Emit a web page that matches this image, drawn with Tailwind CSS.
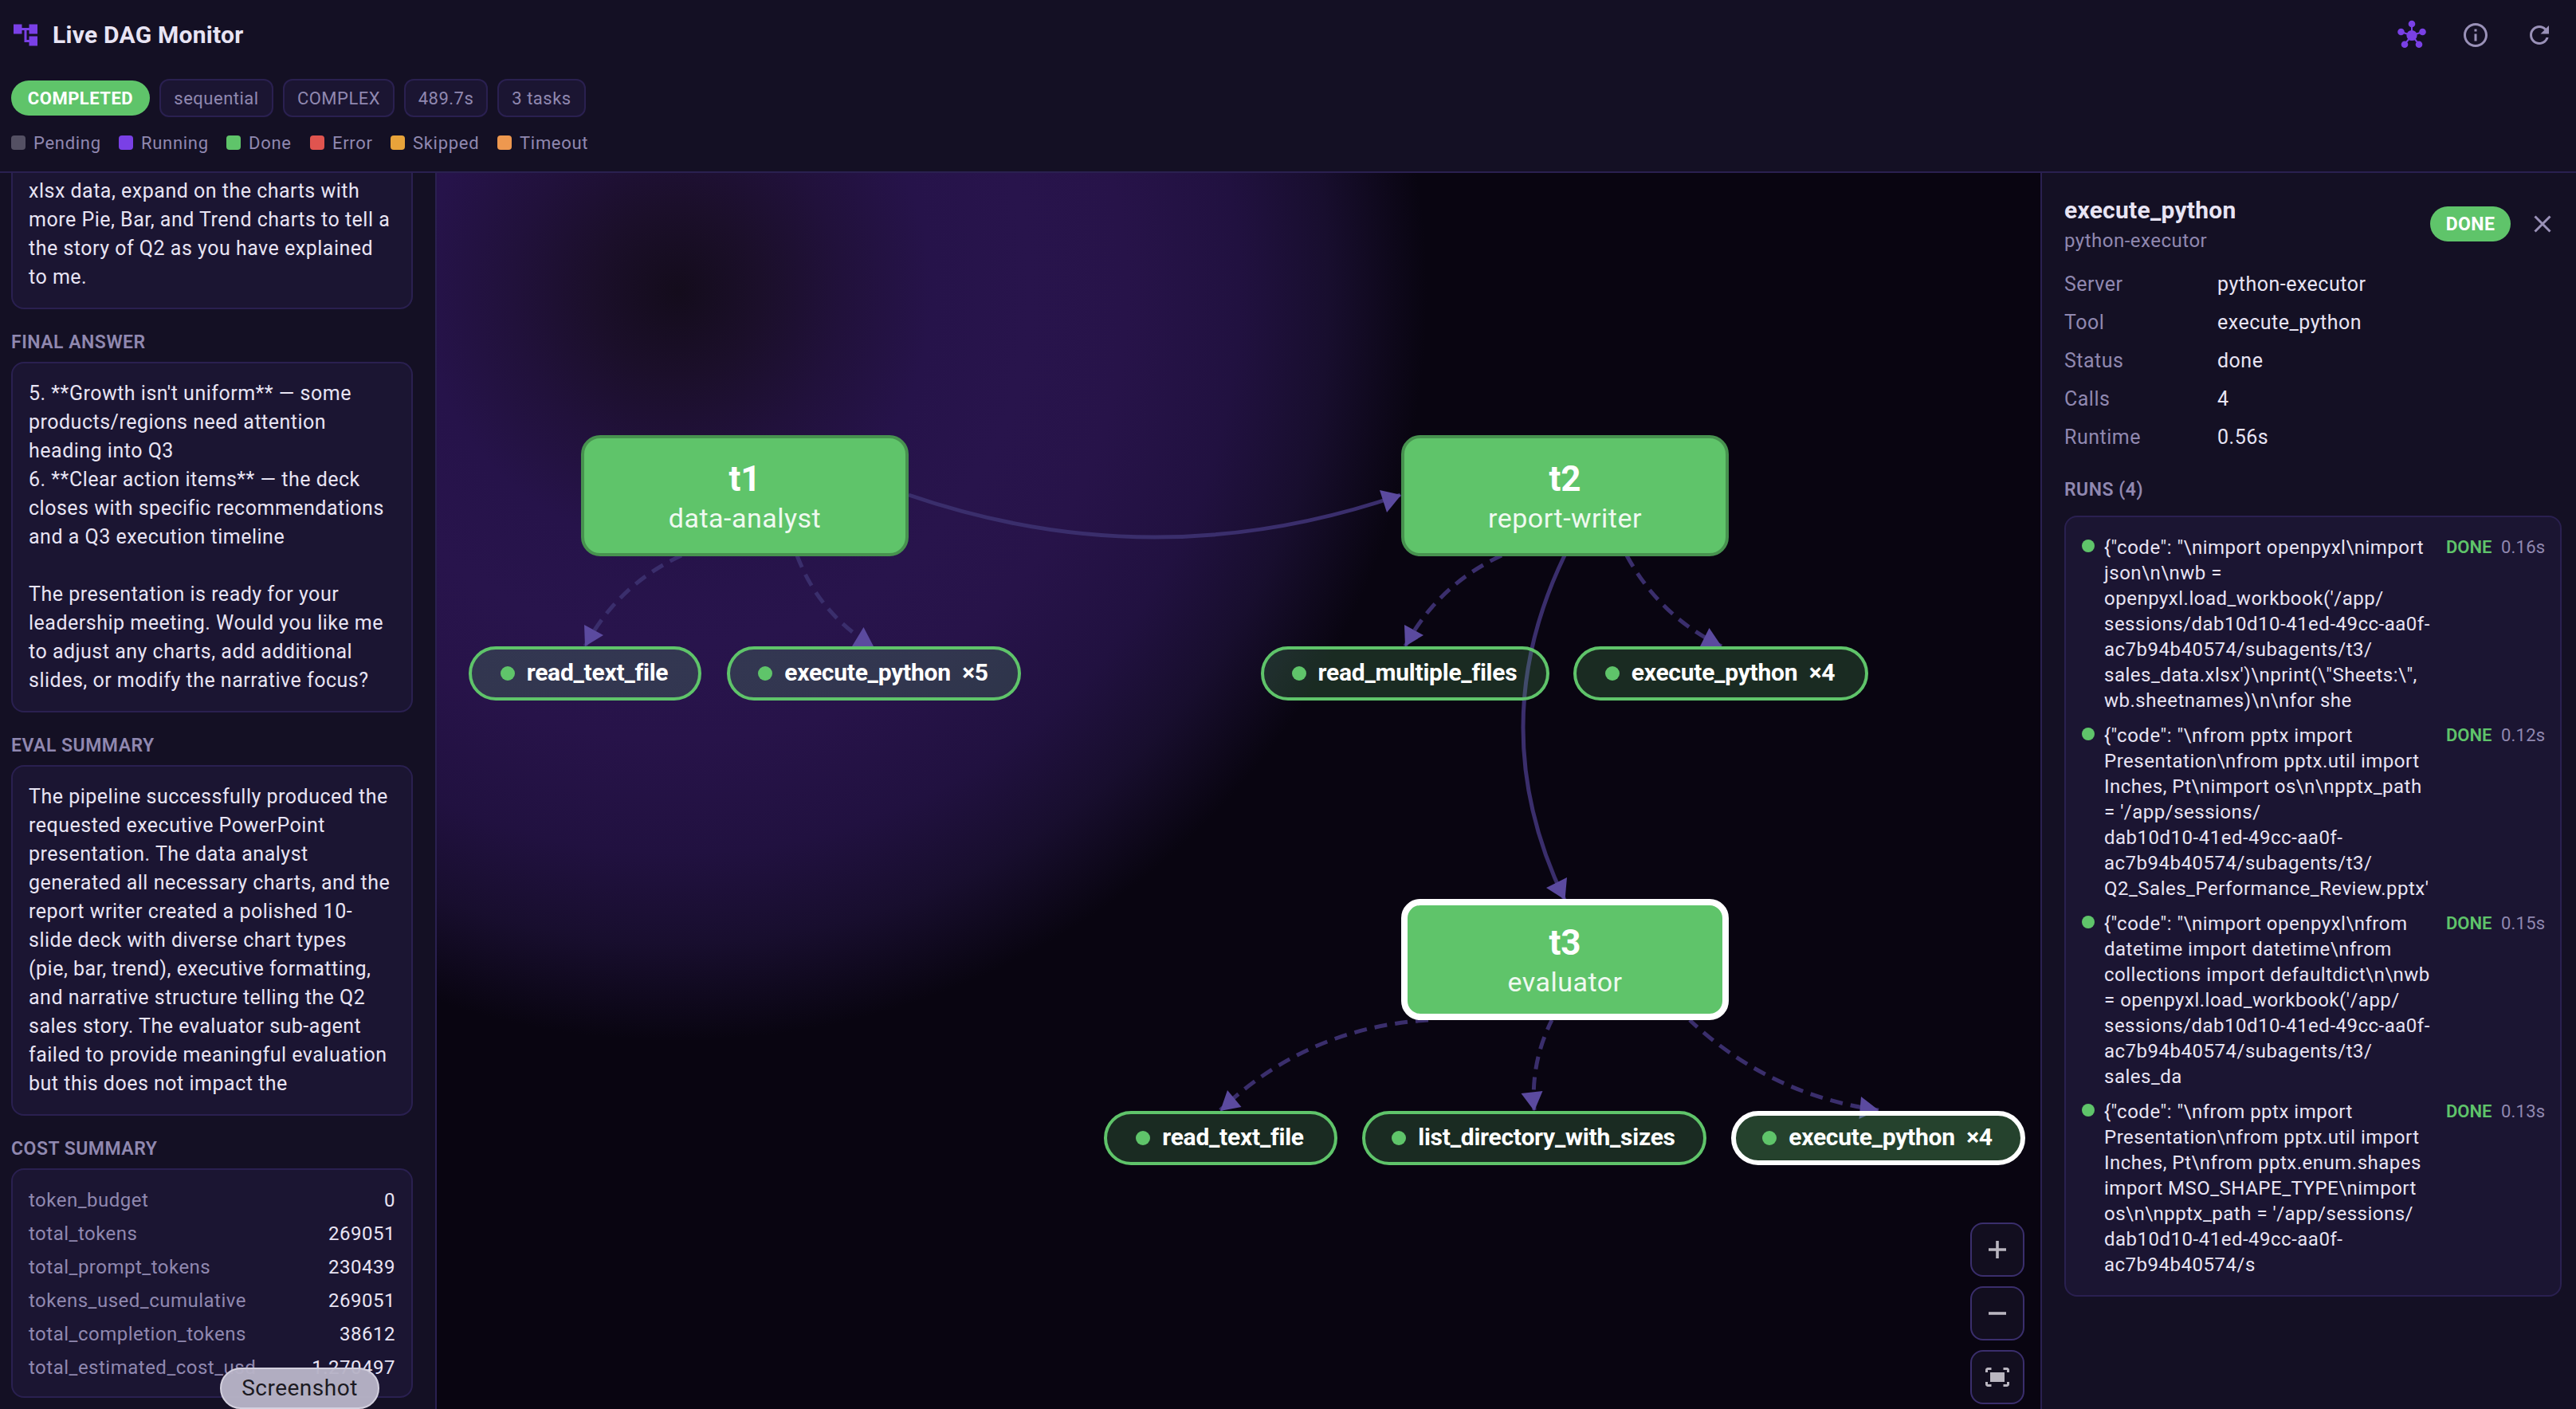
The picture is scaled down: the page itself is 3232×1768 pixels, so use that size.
<!DOCTYPE html>
<html lang="en">
<head>
  <meta charset="UTF-8" />
  <meta name="viewport" content="width=device-width, initial-scale=1" />
  <title>Live DAG Monitor</title>
  <script src="https://cdn.jsdelivr.net/npm/@tailwindcss/browser@4"></script>
</head>
<body class="h-screen overflow-hidden bg-[#141024] font-[Roboto,'Liberation_Sans',sans-serif] tracking-[0.5px] text-[#e8e4f4]">
<div class="relative flex h-full flex-col">

  <!-- Header -->
  <header class="flex h-[217px] shrink-0 flex-col border-b-2 border-[#2a2050] pl-3.5">
    <div class="flex h-[87px] items-center justify-between pr-1.5">
      <div class="flex items-center">
        <svg class="size-9" viewBox="0 0 24 24" fill="#7a40e6"><path d="M22 11V3h-7v3H9V3H2v8h7V8h2v10h4v3h7v-8h-7v3h-2V8h2v3z"/></svg>
        <h1 class="ml-4 text-[30px] leading-none font-bold tracking-[0.25px]">Live DAG Monitor</h1>
      </div>
      <div class="flex">
        <button class="grid size-20 place-items-center">
          <svg class="size-10" viewBox="0 0 40 40" fill="#7a40e6" stroke="#7a40e6" stroke-width="2">
            <path d="M20 20.5V6M20 20.5L6.5 16M20 20.5L33.5 16M20 20.5L11 31.5M20 20.5L29 31.5"/>
            <g stroke="none"><circle cx="20" cy="20.5" r="6.6"/><circle cx="20" cy="6" r="4.3"/><circle cx="6.5" cy="16" r="4.3"/><circle cx="33.5" cy="16" r="4.3"/><circle cx="11" cy="31.7" r="4.3"/><circle cx="29" cy="31.7" r="4.3"/></g>
          </svg>
        </button>
        <button class="grid size-20 place-items-center">
          <svg class="size-9" viewBox="0 0 24 24" fill="#9a91b8"><path d="M11 7h2v2h-2zm0 4h2v6h-2zm1-9C6.48 2 2 6.48 2 12s4.48 10 10 10 10-4.48 10-10S17.52 2 12 2zm0 18c-4.41 0-8-3.59-8-8s3.59-8 8-8 8 3.59 8 8-3.59 8-8 8z"/></svg>
        </button>
        <button class="grid size-20 place-items-center">
          <svg class="size-9" viewBox="0 0 24 24" fill="#9a91b8"><path d="M17.65 6.35C16.2 4.9 14.21 4 12 4c-4.42 0-7.99 3.58-7.99 8s3.57 8 7.99 8c3.73 0 6.84-2.55 7.73-6h-2.08c-.82 2.33-3.04 4-5.65 4-3.31 0-6-2.69-6-6s2.69-6 6-6c1.66 0 3.14.69 4.22 1.78L13 11h7V4l-2.35 2.35z"/></svg>
        </button>
      </div>
    </div>
    <div class="mt-3 flex h-12 items-center gap-3 text-[22px] leading-none text-[#9088b0]">
      <span class="grid h-11 w-[174px] place-items-center rounded-full bg-[#5fc46a] pt-0.5 font-bold text-white">COMPLETED</span>
      <span class="grid h-12 w-[143px] place-items-center rounded-xl border-2 border-[#2a2050] bg-[#1b1532] pt-0.5">sequential</span>
      <span class="grid h-12 w-[140px] place-items-center rounded-xl border-2 border-[#2a2050] bg-[#1b1532] pt-0.5">COMPLEX</span>
      <span class="grid h-12 w-[105px] place-items-center rounded-xl border-2 border-[#2a2050] bg-[#1b1532] pt-0.5">489.7s</span>
      <span class="grid h-12 w-[111px] place-items-center rounded-xl border-2 border-[#2a2050] bg-[#1b1532] pt-0.5">3 tasks</span>
    </div>
    <div class="mt-4 flex h-8 items-center text-[22px] leading-none tracking-[0.7px] text-[#9088b0]">
      <span class="flex w-[135px] items-center gap-2.5"><i class="size-[18px] rounded bg-[#545063]"></i><b class="pt-0.5 font-normal">Pending</b></span>
      <span class="flex w-[135px] items-center gap-2.5"><i class="size-[18px] rounded bg-[#7a40e6]"></i><b class="pt-0.5 font-normal">Running</b></span>
      <span class="flex w-[105px] items-center gap-2.5"><i class="size-[18px] rounded bg-[#5fc46a]"></i><b class="pt-0.5 font-normal">Done</b></span>
      <span class="flex w-[101px] items-center gap-2.5"><i class="size-[18px] rounded bg-[#e0544f]"></i><b class="pt-0.5 font-normal">Error</b></span>
      <span class="flex w-[134px] items-center gap-2.5"><i class="size-[18px] rounded bg-[#e8a33a]"></i><b class="pt-0.5 font-normal">Skipped</b></span>
      <span class="flex items-center gap-2.5"><i class="size-[18px] rounded bg-[#ee984f]"></i><b class="pt-0.5 font-normal">Timeout</b></span>
    </div>
  </header>

  <div class="flex min-h-0 flex-1">
    <!-- Session summary -->
    <aside class="flex w-[548px] shrink-0 flex-col overflow-hidden border-r-2 border-[#2a2050] pr-7 pl-3.5">
      <div class="h-[171px] shrink-0 rounded-b-2xl border-2 border-t-0 border-[#2a2050] bg-[#1b1532] px-5 pt-[5px] text-[25px] leading-9 whitespace-pre">xlsx data, expand on the charts with
more Pie, Bar, and Trend charts to tell a
the story of Q2 as you have explained
to me.</div>
      <h2 class="flex h-[66px] shrink-0 items-center pt-4 text-[23px] leading-none font-semibold tracking-[0.5px] text-[#9088b0]">FINAL ANSWER</h2>
      <div class="h-[440px] shrink-0 rounded-2xl border-2 border-[#2a2050] bg-[#1b1532] p-5 text-[25px] leading-9 whitespace-pre">5. **Growth isn't uniform** — some
products/regions need attention
heading into Q3
6. **Clear action items** — the deck
closes with specific recommendations
and a Q3 execution timeline

The presentation is ready for your
leadership meeting. Would you like me
to adjust any charts, add additional
slides, or modify the narrative focus?</div>
      <h2 class="flex h-[66px] shrink-0 items-center pt-4 text-[23px] leading-none font-semibold tracking-[0.5px] text-[#9088b0]">EVAL SUMMARY</h2>
      <div class="h-[440px] shrink-0 rounded-2xl border-2 border-[#2a2050] bg-[#1b1532] p-5 text-[25px] leading-9 whitespace-pre">The pipeline successfully produced the
requested executive PowerPoint
presentation. The data analyst
generated all necessary charts, and the
report writer created a polished 10-
slide deck with diverse chart types
(pie, bar, trend), executive formatting,
and narrative structure telling the Q2
sales story. The evaluator sub-agent
failed to provide meaningful evaluation
but this does not impact the</div>
      <h2 class="flex h-[66px] shrink-0 items-center pt-4 text-[23px] leading-none font-semibold tracking-[0.5px] text-[#9088b0]">COST SUMMARY</h2>
      <div id="costs" class="h-[288px] shrink-0 rounded-2xl border-2 border-[#2a2050] bg-[#1b1532] px-5 py-4 text-2xl tracking-[0.5px]"></div>
    </aside>

    <!-- DAG canvas -->
    <main id="canvas" class="relative min-w-0 flex-1 overflow-hidden bg-[radial-gradient(circle_940px_at_302px_149px,#140c1c_0%,#1b0f2a_11%,#21113b_22%,#26134a_34%,#28144c_47%,#271349_60%,#211140_75%,#180e2e_87%,#090511_100%)]">
      <svg class="absolute inset-0 size-full" viewBox="548 217 2012 1551" fill="none">
        <g stroke="#3a2e6c" stroke-width="5">
          <path d="M1140 621Q1449 727 1757 621"/>
          <path d="M1963 697Q1859 913 1963 1129"/>
          <g stroke-dasharray="16 10">
            <path d="M855 697Q775 734 734 811"/>
            <path d="M1000 697Q1028 771 1096 811"/>
            <path d="M1884 697Q1804 734 1763 811"/>
            <path d="M2041 697Q2082 773 2160 811"/>
            <path d="M1792 1280Q1641 1289 1531 1393"/>
            <path d="M1947 1280Q1920 1334 1925 1393" stroke-dashoffset="3"/>
            <path d="M2120 1280Q2220 1374 2357 1393" stroke-dashoffset="3"/>
          </g>
        </g>
        <g fill="#5b4a9f">
          <path d="M1731 615L1740 643L1758 621Z"/>
          <path d="M1966 1101L1940 1114L1963.5 1129Z"/>
          <path d="M733 784L757 797L734 811Z"/>
          <path d="M1083.5 787L1069 811H1096Z"/>
          <path d="M1762 784L1786 797L1763 811Z"/>
          <path d="M2144.5 788L2133 811H2160Z"/>
          <path d="M1540 1368L1557.5 1389L1531 1394Z"/>
          <path d="M1908.5 1372L1935.5 1369L1925 1394Z"/>
          <path d="M2335 1376L2332.5 1404L2357 1393Z"/>
        </g>
      </svg>

      <div class="absolute right-5 bottom-1.5 flex flex-col gap-3">
        <button class="grid size-[68px] place-items-center rounded-2xl border-2 border-[#3a2e6c] bg-[#120e1f]">
          <svg class="size-9" viewBox="0 0 36 36" stroke="#bab6c0" stroke-width="3.6"><path d="M7 18H29M18 7V29"/></svg>
        </button>
        <button class="grid size-[68px] place-items-center rounded-2xl border-2 border-[#3a2e6c] bg-[#120e1f]">
          <svg class="size-9" viewBox="0 0 36 36" stroke="#bab6c0" stroke-width="3.6"><path d="M7 18H29"/></svg>
        </button>
        <button class="grid size-[68px] place-items-center rounded-2xl border-2 border-[#3a2e6c] bg-[#120e1f]">
          <svg class="size-9" viewBox="0 0 24 24" fill="#bab6c0"><path d="M17 4h3c1.1 0 2 .9 2 2v2h-2V6h-3V4zM4 8V6h3V4H4c-1.1 0-2 .9-2 2v2h2zm16 8v2h-3v2h3c1.1 0 2-.9 2-2v-2h-2zM7 18H4v-2H2v2c0 1.1.9 2 2 2h3v-2zM18 8H6v8h12V8z"/></svg>
        </button>
      </div>
    </main>

    <!-- Node details -->
    <aside class="flex w-[672px] shrink-0 flex-col border-l-2 border-[#2a2050] pr-[18px] pl-7">
      <div class="mt-7 flex h-[72px] items-center">
        <div class="flex-1">
          <div class="text-[30px] leading-10 font-bold tracking-[0.25px]">execute_python</div>
          <div class="pt-0.5 text-2xl leading-8 text-[#9088b0]">python-executor</div>
        </div>
        <span class="grid h-11 w-[101px] place-items-center rounded-full bg-[#5fc46a] text-[23px] leading-none font-bold tracking-[0.4px] text-white">DONE</span>
        <svg class="mr-1.5 ml-[22px] size-9" viewBox="0 0 36 36" stroke="#9a91b8" stroke-width="3"><path d="M8.5 8.5L27.5 27.5M27.5 8.5L8.5 27.5"/></svg>
      </div>
      <dl id="details" class="mt-4 grid grid-cols-[192px_1fr] text-[25px] leading-[48px]"></dl>
      <h2 class="mt-6 flex h-[50px] items-start pt-1.5 text-[23px] leading-none font-semibold tracking-[0.5px] text-[#9088b0]">RUNS (4)</h2>
      <div id="runs" class="h-[980px] rounded-2xl border-2 border-[#2a2050] bg-[#1b1532] px-5 py-4"></div>
    </aside>
  </div>

  <div class="absolute bottom-0 left-[276px] grid h-[52px] w-[200px] place-items-center rounded-full border-2 border-[#d3d0de] bg-[#b7b3c6]/97 text-[28px] leading-none text-[#1c1a22]">Screenshot</div>
</div>

<script>
  const costs = [
    ["token_budget", "0"],
    ["total_tokens", "269051"],
    ["total_prompt_tokens", "230439"],
    ["tokens_used_cumulative", "269051"],
    ["total_completion_tokens", "38612"],
    ["total_estimated_cost_usd", "1.270497"],
  ];

  const details = [
    ["Server", "python-executor"],
    ["Tool", "execute_python"],
    ["Status", "done"],
    ["Calls", "4"],
    ["Runtime", "0.56s"],
  ];

  const runs = [
    { time: "0.16s", lines: [
      String.raw`{"code": "\nimport openpyxl\nimport`,
      String.raw`json\n\nwb =`,
      "openpyxl.load_workbook('/app/",
      "sessions/dab10d10-41ed-49cc-aa0f-",
      "ac7b94b40574/subagents/t3/",
      String.raw`sales_data.xlsx')\nprint(\"Sheets:\",`,
      String.raw`wb.sheetnames)\n\nfor she`,
    ]},
    { time: "0.12s", lines: [
      String.raw`{"code": "\nfrom pptx import`,
      String.raw`Presentation\nfrom pptx.util import`,
      String.raw`Inches, Pt\nimport os\n\npptx_path`,
      "= '/app/sessions/",
      "dab10d10-41ed-49cc-aa0f-",
      "ac7b94b40574/subagents/t3/",
      "Q2_Sales_Performance_Review.pptx'",
    ]},
    { time: "0.15s", lines: [
      String.raw`{"code": "\nimport openpyxl\nfrom`,
      String.raw`datetime import datetime\nfrom`,
      String.raw`collections import defaultdict\n\nwb`,
      "= openpyxl.load_workbook('/app/",
      "sessions/dab10d10-41ed-49cc-aa0f-",
      "ac7b94b40574/subagents/t3/",
      "sales_da",
    ]},
    { time: "0.13s", lines: [
      String.raw`{"code": "\nfrom pptx import`,
      String.raw`Presentation\nfrom pptx.util import`,
      String.raw`Inches, Pt\nfrom pptx.enum.shapes`,
      String.raw`import MSO_SHAPE_TYPE\nimport`,
      String.raw`os\n\npptx_path = '/app/sessions/`,
      "dab10d10-41ed-49cc-aa0f-",
      "ac7b94b40574/s",
    ]},
  ];

  // x/y are canvas coordinates of the top left corner
  const tasks = [
    { id: "t1", agent: "data-analyst", x: 181, y: 329 },
    { id: "t2", agent: "report-writer", x: 1210, y: 329 },
    { id: "t3", agent: "evaluator", x: 1210, y: 911, selected: true },
  ];

  const tools = [
    { name: "read_text_file", x: 40, y: 594, w: 292 },
    { name: "execute_python  ×5", x: 364, y: 594, w: 369 },
    { name: "read_multiple_files", x: 1034, y: 594, w: 362 },
    { name: "execute_python  ×4", x: 1426, y: 594, w: 370 },
    { name: "read_text_file", x: 837, y: 1177, w: 293 },
    { name: "list_directory_with_sizes", x: 1161, y: 1177, w: 432 },
    { name: "execute_python  ×4", x: 1624, y: 1177, w: 369, selected: true },
  ];

  document.getElementById("costs").innerHTML = costs.map(([k, v]) =>
    `<div class="flex h-[42px] items-center justify-between pt-0.5"><span class="text-[#9088b0]">${k}</span><span>${v}</span></div>`
  ).join("");

  document.getElementById("details").innerHTML = details.map(([k, v]) =>
    `<dt class="text-[#9088b0]">${k}</dt><dd>${v}</dd>`
  ).join("");

  document.getElementById("runs").innerHTML = runs.map(r => `
    <div class="flex h-[236px] items-start pt-1.5">
      <i class="mt-1.5 size-4 shrink-0 rounded-full bg-[#5fc46a]"></i>
      <div class="ml-3 w-[416px] shrink-0 text-2xl leading-8 whitespace-pre">${r.lines.join("\n")}</div>
      <span class="ml-[13px] w-[69px] shrink-0 text-[22px] leading-[31px] font-semibold tracking-[0px] text-[#5fc46a]">DONE</span>
      <span class="text-[22px] leading-[31px] tracking-[0.2px] whitespace-nowrap text-[#9088b0]">${r.time}</span>
    </div>`).join("");

  const canvas = document.getElementById("canvas");

  tasks.forEach(t => {
    const el = document.createElement("div");
    el.className = "absolute flex h-[152px] w-[411px] flex-col items-center justify-center rounded-[24px] bg-[#5fc46a] pt-1.5 text-white " +
      (t.selected ? "border-[8px] border-white" : "border-4 border-[#47924f]");
    el.style.left = t.x + "px";
    el.style.top = t.y + "px";
    el.innerHTML = `<b class="text-[44px] leading-[50px] font-bold tracking-[0px]">${t.id}</b><span class="text-[34px] leading-[49px] text-white/90">${t.agent}</span>`;
    canvas.appendChild(el);
  });

  tools.forEach(t => {
    const el = document.createElement("div");
    el.className = "absolute flex h-[68px] items-center justify-center gap-[15px] rounded-full pr-0.5 " +
      (t.selected ? "border-[6px] border-white bg-[#5fc46a]/32" : "border-4 border-[#5fc46a] bg-[#5fc46a]/20");
    el.style.left = t.x + "px";
    el.style.top = t.y + "px";
    el.style.width = t.w + "px";
    el.innerHTML = `<i class="size-[18px] shrink-0 rounded-full bg-[#5fc46a]"></i><span class="pb-0.5 text-[30px] leading-none font-bold tracking-[-0.25px] whitespace-pre text-white">${t.name}</span>`;
    canvas.appendChild(el);
  });
</script>
</body>
</html>
